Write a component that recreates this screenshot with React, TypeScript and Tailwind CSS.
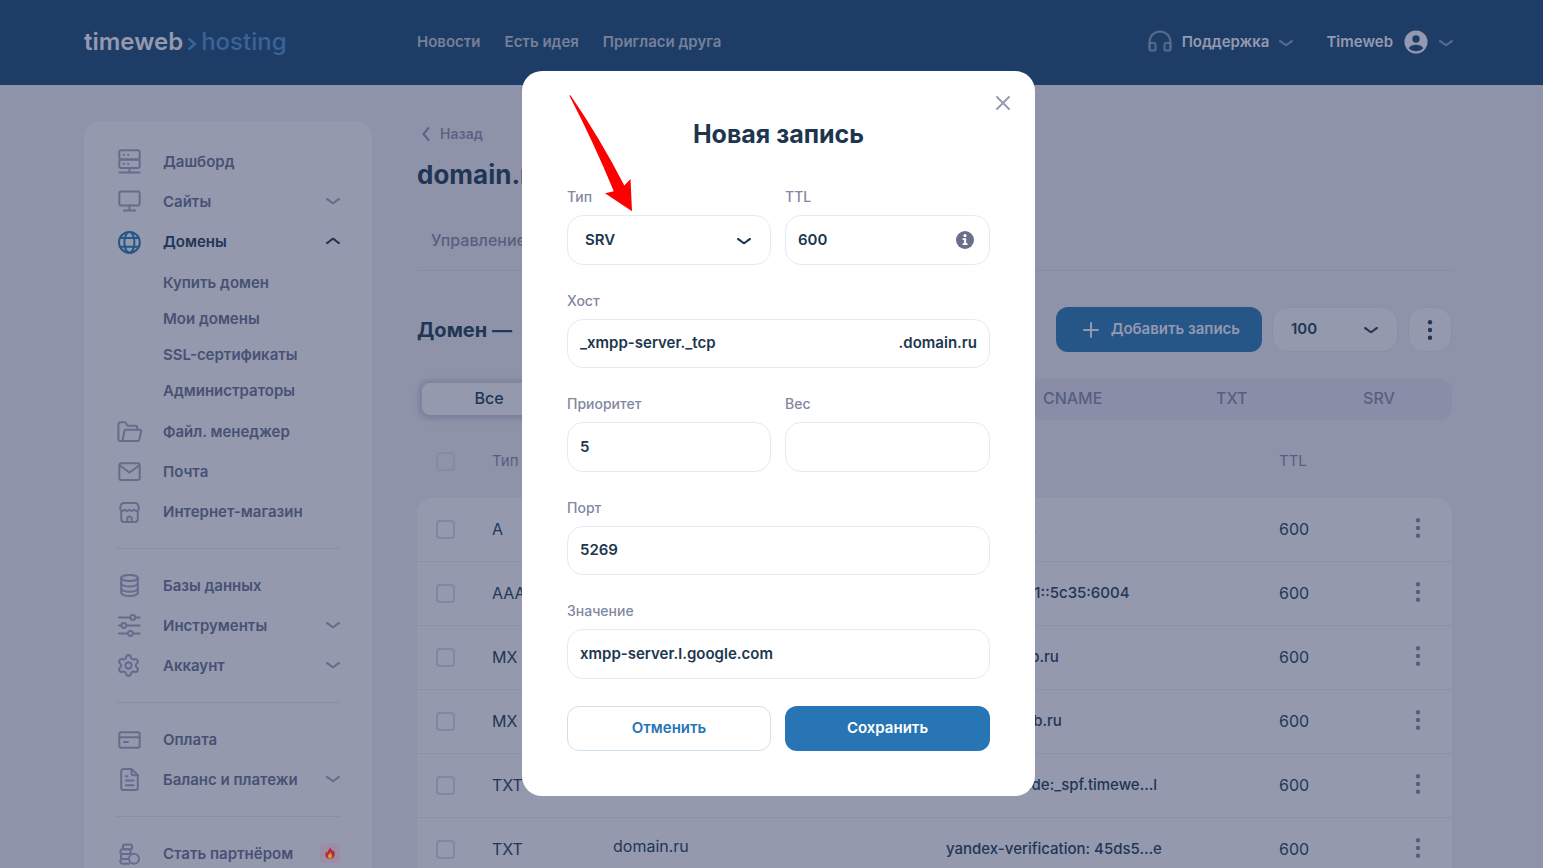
import { useState } from 'react';
import type { ReactNode } from 'react';
import { Settings } from 'lucide-react';
import clsx from 'clsx';

interface MenuItem {
  label: string;
  icon: ReactNode;
  expandable?: boolean;
  open?: boolean;
  badge?: boolean;
  children?: string[];
}

interface DnsRecord {
  type: string;
  host: string;
  value: string;
  ttl: number;
}

function Icon({ children }: { children: ReactNode }) {
  return (
    <svg
      viewBox="0 0 24 24"
      className="h-6 w-6 overflow-visible"
      fill="none"
      stroke="currentColor"
      strokeWidth="2"
      strokeLinecap="round"
      strokeLinejoin="round"
      aria-hidden="true"
    >
      {children}
    </svg>
  );
}

function Chevron({ className }: { className?: string }) {
  return (
    <svg
      viewBox="0 0 14 8"
      className={clsx('h-2 w-3.5 shrink-0', className)}
      fill="none"
      stroke="currentColor"
      strokeWidth="2"
      strokeLinecap="round"
      strokeLinejoin="round"
      aria-hidden="true"
    >
      <path d="M1 2C3 3 5 5.500 7 6.300 9 5.500 11 3 13 2" />
    </svg>
  );
}

function Dots({ className }: { className?: string }) {
  return (
    <svg viewBox="0 0 6 22" className={clsx('h-[22px] w-1.5', className)} fill="currentColor" aria-hidden="true">
      <circle cx="3" cy="3.200" r="2.200" />
      <circle cx="3" cy="11" r="2.200" />
      <circle cx="3" cy="18.800" r="2.200" />
    </svg>
  );
}

const menu: MenuItem[][] = [
  [
    {
      label: 'Дашборд',
      icon: (
        <Icon>
          <rect x="2.3" y="1.3" width="20.4" height="9.2" rx="2" />
          <rect x="2.3" y="10.5" width="20.4" height="8.6" rx="2" />
          <path d="M12.5 19.1v4.3M2.3 23.5h20.4" />
          <path d="M6.8 5.8h.1M11.2 5.8h.1M6.8 14.8h.1M11.2 14.8h.1" strokeWidth="2.2" />
        </Icon>
      ),
    },
    {
      label: 'Сайты',
      expandable: true,
      icon: (
        <Icon>
          <rect x="2.3" y="2.5" width="20.4" height="14" rx="2" />
          <path d="M12.5 16.5v5M6.8 21.5h11.6" />
        </Icon>
      ),
    },
    {
      label: 'Домены',
      expandable: true,
      open: true,
      children: ['Купить домен', 'Мои домены', 'SSL-сертификаты', 'Администраторы'],
      icon: (
        <Icon>
          <circle cx="12.4" cy="13.4" r="10.4" />
          <ellipse cx="12.4" cy="13.4" rx="5" ry="10.4" />
          <path d="M3 9h18.8M3 17.8h18.8" />
        </Icon>
      ),
    },
    {
      label: 'Файл. менеджер',
      icon: (
        <Icon>
          <path d="M5.5 22H3.4a2 2 0 0 1-2-2V5.2a2 2 0 0 1 2-2h4.2a1.6 1.6 0 0 1 1.5 1l.6 1.5a1.6 1.6 0 0 0 1.5 1h7a2 2 0 0 1 2 2v1.8" />
          <path d="M8.9 10.7h14.2c.8 0 1.3.6 1.1 1.4l-1.8 8.2A2.1 2.1 0 0 1 20.3 22H5.5L7.4 12a1.6 1.6 0 0 1 1.5-1.3Z" />
        </Icon>
      ),
    },
    {
      label: 'Почта',
      icon: (
        <Icon>
          <rect x="2.3" y="4.3" width="20.4" height="16.6" rx="2" />
          <path d="m2.8 6.5 9.7 7 9.7-7" />
        </Icon>
      ),
    },
    {
      label: 'Интернет-магазин',
      icon: (
        <Icon>
          <path d="M4.200 12v8a3 3 0 0 0 3 3h10.600a3 3 0 0 0 3-3v-8" />
          <path d="M6.800 4h11.400a3 3 0 0 1 2.900 2.300l.8 3.200a2.300 2.300 0 0 1-3.800 1.800l-.8-.6-1.700 1a1.700 1.700 0 0 1-1.800 0l-1.300-.9-1.300.9a1.700 1.700 0 0 1-1.800 0l-1.700-1-.8.6a2.300 2.300 0 0 1-3.800-1.800l.8-3.200A3 3 0 0 1 6.800 4Z" />
          <path d="M10.300 23v-3.300a2.200 2.200 0 0 1 4.400 0V23" />
        </Icon>
      ),
    },
  ],
  [
    {
      label: 'Базы данных',
      icon: (
        <Icon>
          <ellipse cx="12.5" cy="5" rx="8.3" ry="3" />
          <path d="M4.200 5v15c0 1.600 3.700 3 8.300 3s8.300-1.400 8.300-3V5" />
          <path d="M4.200 10.500c0 1.600 3.700 3 8.300 3s8.300-1.400 8.300-3M4.200 15.800c0 1.600 3.700 3 8.300 3s8.300-1.400 8.300-3" />
        </Icon>
      ),
    },
    {
      label: 'Инструменты',
      expandable: true,
      icon: (
        <Icon>
          <path d="M2 4.500h11.400M18.200 4.500h4.500M2 12.500h2.400M9.200 12.500h13.500M2 20.500h9M15.800 20.500h6.900" />
          <circle cx="15.8" cy="4.5" r="2.4" />
          <circle cx="6.8" cy="12.5" r="2.4" />
          <circle cx="13.4" cy="20.5" r="2.4" />
        </Icon>
      ),
    },
    { label: 'Аккаунт', expandable: true, icon: <Settings size={25} strokeWidth={2} className="shrink-0" aria-hidden="true" /> },
  ],
  [
    {
      label: 'Оплата',
      icon: (
        <Icon>
          <rect x="2.3" y="5.3" width="20.4" height="15.5" rx="2" />
          <path d="M2.300 10.300h20.400M7 15h4" />
        </Icon>
      ),
    },
    {
      label: 'Баланс и платежи',
      expandable: true,
      icon: (
        <Icon>
          <path d="M14.500 2H6.200a2 2 0 0 0-2 2v17a2 2 0 0 0 2 2h12.600a2 2 0 0 0 2-2V8.300Z" />
          <path d="M14.500 2v4.300a2 2 0 0 0 2 2h4.300M8.800 9.300h1.500M8.800 13.600h7.800M8.800 18.200h7.800" />
        </Icon>
      ),
    },
  ],
  [
    {
      label: 'Стать партнёром',
      badge: true,
      icon: (
        <Icon>
          <rect x="5.8" y="3.5" width="9.4" height="4.8" rx="2.4" />
          <rect x="3.3" y="8.3" width="10.5" height="4.8" rx="2.4" />
          <path d="M10.500 13.100H6.300a2.400 2.400 0 0 0 0 4.800h4.500M10.500 17.900H5.700a2.400 2.400 0 0 0 0 4.800h6.300" />
          <circle cx="17" cy="17.7" r="5" />
        </Icon>
      ),
    },
  ],
];

const records: DnsRecord[] = [
  { type: 'A', host: 'domain.ru', value: '92.53.96.114', ttl: 600 },
  { type: 'AAAA', host: 'domain.ru', value: '2a03:6f00:a1::5c35:6004', ttl: 600 },
  { type: 'MX', host: 'domain.ru', value: 'mx1.timeweb.ru', ttl: 600 },
  { type: 'MX', host: 'domain.ru', value: 'mx2.timeweb.ru', ttl: 600 },
  { type: 'TXT', host: 'domain.ru', value: 'v=spf1 include:_spf.timewe…l', ttl: 600 },
  { type: 'TXT', host: 'domain.ru', value: 'yandex-verification: 45ds5…e', ttl: 600 },
];

const tabs = ['Все', 'A', 'AAAA', 'MX', 'CNAME', 'TXT', 'SRV'];

const inputClass =
  'w-full rounded-2xl border border-[#e9e9f0] bg-white px-3 font-semibold text-[#1d364d] outline-none';
const checkboxClass =
  'block h-[19px] w-[19px] appearance-none rounded border-2 border-[#8087a0] bg-transparent';

function Header() {
  return (
    <header className="flex h-[85px] items-center bg-[#1e3d66] pr-[90px] pl-[84px] text-[15px] font-semibold">
      <a href="#" className="flex w-[333px] shrink-0 items-center pb-0.5 text-2xl font-semibold text-[#9499b0]">
        timeweb
        <svg viewBox="0 0 10 16" className="mx-1 mt-1 h-4 w-2.5" fill="none" stroke="#3a6397" strokeWidth="2.500" aria-hidden="true">
          <path d="m1.500 2.500 6.500 5.500-6.500 5.500" />
        </svg>
        <span className="font-medium text-[#3a6397]">hosting</span>
      </a>
      <nav className="flex gap-6 text-[#76809b]">
        <a href="#">Новости</a>
        <a href="#">Есть идея</a>
        <a href="#">Пригласи друга</a>
      </nav>
      <div className="ml-auto flex items-center gap-[33px] text-[#9499b0]">
        <button type="button" className="flex items-center gap-2.5">
          <svg viewBox="0 0 24 22" className="mb-1 h-[22px] w-6 text-[#586a8b]" fill="none" stroke="currentColor" strokeWidth="2" strokeLinejoin="round" aria-hidden="true">
            <path d="M1.500 19.500V12a10.500 10.500 0 0 1 21 0v7.500" />
            <path d="M1.500 13H6a1.500 1.500 0 0 1 1.500 1.500V19A1.500 1.500 0 0 1 6 20.500H3A1.500 1.500 0 0 1 1.500 19ZM22.500 13H18a1.500 1.500 0 0 0-1.500 1.500V19a1.500 1.500 0 0 0 1.500 1.500h3a1.500 1.500 0 0 0 1.500-1.500Z" />
          </svg>
          Поддержка
          <Chevron className="text-[#586a8b]" />
        </button>
        <button type="button" className="flex items-center gap-[11px]">
          Timeweb
          <svg viewBox="0 0 24 24" className="mb-0.5 h-6 w-6" aria-hidden="true">
            <circle cx="12" cy="12" r="11.5" fill="#9499b0" />
            <circle cx="12" cy="9" r="3.7" fill="#1e3d66" />
            <path d="M4.800 18.300C6 15.700 9 14.800 12 14.800s6 .9 7.200 3.500C17.500 20.200 15 21.300 12 21.300s-5.500-1.100-7.200-3Z" fill="#1e3d66" />
          </svg>
          <Chevron className="text-[#586a8b]" />
        </button>
      </div>
    </header>
  );
}

function Sidebar() {
  return (
    <aside className="w-72 shrink-0 rounded-2xl bg-[#9499ae] px-8 pt-5 pb-8 text-[15px] font-semibold text-[#475174]">
      {menu.map((group, index) => (
        <ul key={index} className={clsx(index > 0 && 'mt-[17px] border-t border-[#898ea7] pt-4')}>
          {group.map((item) => (
            <li key={item.label}>
              <a href="#" className={clsx('flex h-10 items-center', item.open && 'text-[#1f3657]')}>
                <span className={clsx('mr-[22px] flex w-[25px] justify-center', item.open ? 'text-[#265588]' : 'text-[#656c8c]')}>
                  {item.icon}
                </span>
                <span className="pt-0.5">{item.label}</span>
                {item.expandable && (
                  <Chevron className={clsx('ml-auto', item.open ? 'rotate-180' : 'text-[#656c8c]')} />
                )}
                {item.badge && (
                  <span className="ml-auto flex h-5 w-5 items-center justify-center rounded bg-[#9c8fa5]">
                    <svg viewBox="0 0 10 12" className="h-3 w-2.5" aria-hidden="true">
                      <path d="M5.200 0c.2 2 2 2.600 2.600 4.300.4-.3.500-.9.400-1.400C9.500 4.200 10 6 9.700 8c-.3 2.300-2.200 4-4.600 4S.6 10.400.4 8.200c-.1-1.600.5-2.800 1.300-3.700 0 .6.2 1 .6 1.300C2.700 3.400 4.800 2.300 5.200 0Z" fill="#b5283f" />
                      <path d="M5.300 5c.2 1.400 1.900 2.200 1.900 4.200 0 1.400-.9 2.300-2.200 2.300s-2.200-.9-2.200-2.300C2.800 7.500 5 7 5.300 5Z" fill="#c99a38" />
                    </svg>
                  </span>
                )}
              </a>
              {item.children && (
                <ul className="py-[3px]">
                  {item.children.map((child) => (
                    <li key={child}>
                      <a href="#" className="flex h-9 items-center pt-0.5 pl-[47px]">
                        {child}
                      </a>
                    </li>
                  ))}
                </ul>
              )}
            </li>
          ))}
        </ul>
      ))}
    </aside>
  );
}

function DomainPage() {
  return (
    <main className="min-w-0 flex-1 text-[#1f3657]">
      <a href="#" className="mt-[3px] flex h-5 items-center gap-[10px] pl-[5px] text-sm font-semibold text-[#5c6485]">
        <svg viewBox="0 0 8 14" className="h-3.5 w-2" fill="none" stroke="currentColor" strokeWidth="2" strokeLinecap="round" strokeLinejoin="round" aria-hidden="true">
          <path d="M6.500 1 1.500 7l5 6" />
        </svg>
        Назад
      </a>
      <h1 className="mt-[15px] text-[26px] leading-8 font-bold">domain.ru</h1>
      <nav className="mt-8 flex h-12 border-b border-[#878ca5] pl-3.5 text-base font-medium text-[#565f80]">
        <a href="#" className="leading-[34px]">Управление</a>
      </nav>
      <div className="mt-9 flex items-center gap-[10px] text-[15px] font-semibold">
        <h2 className="mr-auto text-xl font-bold">
          Домен — <span className="ml-1 text-[#7a7794]">Премиум</span>
        </h2>
        <button type="button" className="flex h-[45px] items-center gap-3 rounded-xl bg-[#265588] pr-[22px] pl-[27px] text-[#9499b0]">
          <svg viewBox="0 0 16 16" className="h-4 w-4" stroke="currentColor" strokeWidth="2" strokeLinecap="round" aria-hidden="true">
            <path d="M8 1v14M1 8h14" />
          </svg>
          Добавить запись
        </button>
        <div className="relative">
          <select aria-label="Записей на странице" className="block h-[45px] w-[126px] appearance-none rounded-2xl border border-[#8b90a9] bg-[#9499ae] pl-[18px]">
            <option>100</option>
          </select>
          <Chevron className="pointer-events-none absolute top-[19px] right-5" />
        </div>
        <button type="button" aria-label="Действия" className="flex h-[45px] w-11 items-center justify-center rounded-2xl border border-[#8b90a9] bg-[#9499ae]">
          <Dots />
        </button>
      </div>

      <div className="mt-[27px] grid h-[41px] grid-cols-[134fr_145fr_145fr_145fr_162fr_156fr_138fr] rounded-xl bg-[#898da7] p-1 pb-[5px] pl-[5px] text-base font-medium text-[#565f80]">
        {tabs.map((tab, index) => (
          <button
            key={tab}
            type="button"
            className={clsx('pb-0.5', index === 0 && 'rounded-lg bg-[#9499ae] text-[#1f3657] shadow-[0_1px_6px_2px_rgba(90,98,135,0.35)]')}
          >
            {tab}
          </button>
        ))}
      </div>

      <table className="w-full table-fixed border-separate border-spacing-0 text-left text-base">
        <colgroup>
          <col className="w-[75px]" />
          <col className="w-[121px]" />
          <col className="w-[333px]" />
          <col />
          <col className="w-[121px]" />
          <col className="w-[52px]" />
        </colgroup>
        <thead>
          <tr className="h-[78px] text-[15px] text-[#565f80] *:pt-1 *:align-middle">
            <th className="pl-[19px] opacity-70">
              <input type="checkbox" aria-label="Выбрать все" className={checkboxClass} />
            </th>
            <th className="font-normal">Тип</th>
            <th className="font-normal">Хост</th>
            <th className="font-normal">Значение</th>
            <th className="font-normal">TTL</th>
            <th aria-label="Действия" />
          </tr>
        </thead>
        <tbody>
          {records.map((record, index) => (
            <tr
              key={index}
              className="h-16 bg-[#9499ae] *:border-b *:border-[#8c91a9] first:*:first:rounded-tl-2xl first:*:last:rounded-tr-2xl"
            >
              <td className="pl-[19px]">
                <input type="checkbox" aria-label={`Выбрать ${record.type}`} className={checkboxClass} />
              </td>
              <td className="pb-0.5">{record.type}</td>
              <td className="pb-2">{record.host}</td>
              <td className="text-[15px] font-medium whitespace-nowrap">{record.value}</td>
              <td className="pb-0.5">{record.ttl}</td>
              <td className="pb-1">
                <button type="button" aria-label="Действия с записью" className="ml-[15px] block text-[#565f80]">
                  <Dots />
                </button>
              </td>
            </tr>
          ))}
        </tbody>
      </table>
    </main>
  );
}

interface FieldProps {
  id: string;
  label: string;
  children: ReactNode;
}

function Field({ id, label, children }: FieldProps) {
  return (
    <div>
      <label htmlFor={id} className="mb-2 block text-sm leading-5 font-medium text-[#8287a2]">
        {label}
      </label>
      <div className="relative">{children}</div>
    </div>
  );
}

function RecordModal() {
  const [form, setForm] = useState({
    type: 'SRV',
    ttl: '600',
    host: '_xmpp-server._tcp',
    priority: '5',
    weight: '',
    port: '5269',
    value: 'xmpp-server.l.google.com',
  });

  const bind = (name: keyof typeof form) => ({
    id: name,
    value: form[name],
    onChange: (e: { target: { value: string } }) => setForm({ ...form, [name]: e.target.value }),
  });

  return (
    <div className="fixed inset-0 flex items-start justify-center pt-[71px] pl-3.5">
      <form
        role="dialog"
        aria-labelledby="modal-title"
        className="relative w-[513px] rounded-[20px] bg-white px-[45px] pt-[47px] pb-[45px] text-[15px]"
        onSubmit={(e) => e.preventDefault()}
      >
        <button type="button" aria-label="Закрыть" className="absolute top-[25px] right-[25px] text-[#989cb3]">
          <svg viewBox="0 0 14 14" className="h-3.5 w-3.5" stroke="currentColor" strokeWidth="2" strokeLinecap="round" aria-hidden="true">
            <path d="m1 1 12 12M13 1 1 13" />
          </svg>
        </button>
        <h2 id="modal-title" className="text-center text-[25px] leading-8 font-bold text-[#1d364d]">
          Новая запись
        </h2>

        <div className="mt-[37px] flex flex-col gap-[26px]">
          <div className="grid grid-cols-[204px_1fr] gap-3.5">
            <Field id="type" label="Тип">
              <select {...bind('type')} className={clsx(inputClass, 'h-[50px] appearance-none pl-[17px]')}>
                <option>SRV</option>
              </select>
              <Chevron className="pointer-events-none absolute top-[22px] right-5 text-[#1d364d]" />
            </Field>
            <Field id="ttl" label="TTL">
              <input {...bind('ttl')} className={clsx(inputClass, 'h-[50px] pb-0.5')} />
              <svg viewBox="0 0 18 18" className="absolute top-4 right-4 h-[18px] w-[18px]" aria-hidden="true">
                <circle cx="9" cy="9" r="9" fill="#6a6f8b" />
                <circle cx="9" cy="4.6" r="1.6" fill="#fff" />
                <path d="M6.600 7.300h3.600v5h1.400v1.700H6.600v-1.700h1.400V9H6.600Z" fill="#fff" />
              </svg>
            </Field>
          </div>
          <Field id="host" label="Хост">
            <div className={clsx(inputClass, 'flex h-[49px] items-center')}>
              <input {...bind('host')} className="min-w-0 flex-1 outline-none" />
              <span>.domain.ru</span>
            </div>
          </Field>
          <div className="grid grid-cols-[204px_1fr] gap-3.5">
            <Field id="priority" label="Приоритет">
              <input {...bind('priority')} className={clsx(inputClass, 'h-[50px] pb-0.5')} />
            </Field>
            <Field id="weight" label="Вес">
              <input {...bind('weight')} className={clsx(inputClass, 'h-[50px] pb-0.5')} />
            </Field>
          </div>
          <Field id="port" label="Порт">
            <input {...bind('port')} className={clsx(inputClass, 'h-[49px] pb-0.5')} />
          </Field>
          <Field id="value" label="Значение">
            <input {...bind('value')} className={clsx(inputClass, 'h-[50px] pb-0.5')} />
          </Field>
        </div>

        <div className="mt-[27px] grid grid-cols-[204px_1fr] gap-3.5 font-semibold">
          <button type="button" className="h-[45px] rounded-xl border border-[#cfe0ef] text-[#2775b5]">
            Отменить
          </button>
          <button type="submit" className="h-[45px] rounded-xl bg-[#2775b5] text-white">
            Сохранить
          </button>
        </div>

        <svg viewBox="0 0 64 118" className="pointer-events-none absolute top-6 left-[47px] h-[118px] w-16" fill="#fe0000" aria-hidden="true">
          <path d="M.3.500 1.400.200Q31 43 55.300 90.500L61.500 84 63 116.200 36 98.300 44.800 96.200Q24 46 .3.500Z" />
        </svg>
      </form>
    </div>
  );
}

export default function App() {
  return (
    <div className="h-screen overflow-hidden bg-[#8e93a9] font-['Inter','Noto_Sans',sans-serif]">
      <Header />
      <div className="flex gap-[45px] pt-9 pr-[91px] pl-[84px]">
        <Sidebar />
        <DomainPage />
      </div>
      <RecordModal />
    </div>
  );
}
